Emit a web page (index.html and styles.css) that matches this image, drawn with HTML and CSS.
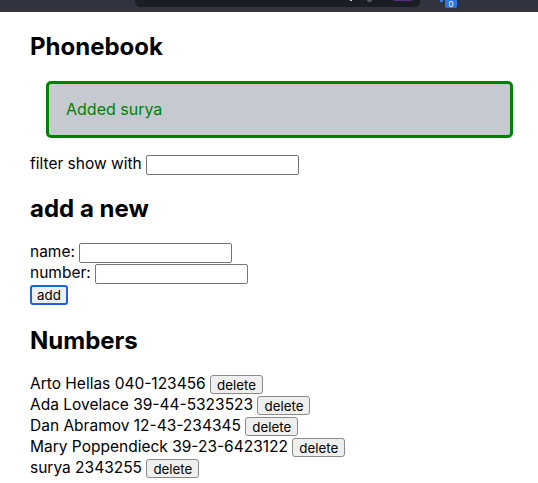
FILE: index.html
```
<!DOCTYPE html>
<html>
<head>
<meta charset="utf-8">
<link rel="stylesheet" href="styles.css">
</head>
<body>
<div class="topbar">
  <div class="urlbox"><span class="dot"></span><span class="knob"></span><span class="purple"></span></div>
  <span class="tick"></span>
  <span class="badge">0</span>
</div>
<div class="app">
  <h2 class="title">Phonebook</h2>
  <div class="notice">Added surya</div>
  <div class="line">filter show with <input class="field" type="text"></div>
  <h2 class="title title-sub">add a new</h2>
  <form class="form">
    <div class="line">name: <input class="field" type="text"></div>
    <div class="line">number: <input class="field" type="text"></div>
    <div class="line"><button class="btn btn-focus" type="button">add</button></div>
  </form>
  <h2 class="title title-sub title-numbers">Numbers</h2>
  <div class="list">
    <div class="line">Arto Hellas 040-123456 <button class="btn" type="button">delete</button></div>
    <div class="line">Ada Lovelace 39-44-5323523 <button class="btn" type="button">delete</button></div>
    <div class="line">Dan Abramov 12-43-234345 <button class="btn" type="button">delete</button></div>
    <div class="line">Mary Poppendieck 39-23-6423122 <button class="btn" type="button">delete</button></div>
    <div class="line">surya 2343255 <button class="btn" type="button">delete</button></div>
  </div>
</div>
</body>
</html>
```
FILE: styles.css
```
html, body {
  margin: 0;
  padding: 0;
  background: #ffffff;
}
body {
  font-family: Inter, "Liberation Sans", sans-serif;
  font-size: 15.5px;
  color: #000;
}
.topbar {
  position: relative;
  height: 12px;
  background: #31333f;
}
.urlbox {
  position: absolute;
  left: 135px;
  top: 0;
  width: 285px;
  height: 7px;
  background: #1b1d25;
  border-radius: 0 0 5px 5px;
}
.dot {
  position: absolute;
  left: 215px;
  top: 0;
  width: 2px;
  height: 1px;
  background: #d0d0d0;
}
.knob {
  position: absolute;
  left: 232px;
  top: 0;
  width: 5px;
  height: 2px;
  border-radius: 0 0 3px 3px;
  background: #5a5c66;
}
.purple {
  position: absolute;
  left: 259px;
  top: 0;
  width: 18px;
  height: 1px;
  background: #5b2a86;
}
.tick {
  position: absolute;
  left: 440px;
  top: 0;
  width: 3px;
  height: 2px;
  background: #3b7be0;
}
.badge {
  position: absolute;
  left: 445px;
  top: 0;
  width: 12px;
  height: 8px;
  background: #2f73e6;
  border-radius: 0 0 2px 2px;
  color: #fff;
  font-size: 8px;
  line-height: 8px;
  text-align: center;
}
.app {
  padding: 0 0 0 30px;
}
.title {
  font-size: 24px;
  font-weight: 700;
  line-height: 29px;
  margin: 20px 0;
}
.title-sub {
  margin-bottom: 18px;
}
.title-numbers {
  margin-top: 22px;
}
.notice {
  color: #008000;
  background: #c5cad1;
  border: 3px solid #008000;
  border-radius: 5px;
  padding: 16px 17px;
  margin: 0 25px 15px 16px;
  line-height: 19px;
  font-size: 16px;
}
.form {
  margin: 0;
}
.line {
  line-height: 21px;
  height: 21px;
}
.field {
  font-family: Inter, "Liberation Sans", sans-serif;
  font-size: 13.33px;
  width: 153px;
  height: 20px;
  box-sizing: border-box;
  border: 1px solid #767676;
  border-radius: 2px;
  padding: 1px 2px;
  vertical-align: middle;
  background: #fff;
}
.btn {
  font-family: Inter, "Liberation Sans", sans-serif;
  font-size: 13.33px;
  line-height: 16px;
  height: 19px;
  padding: 0 6px;
  border: 1px solid #8a8a8a;
  border-radius: 3px;
  background: #efefef;
  color: #000;
  vertical-align: middle;
}
.btn-focus {
  height: 20px;
  border: 2px solid #1a66d6;
  padding: 0 5px;
}
```
